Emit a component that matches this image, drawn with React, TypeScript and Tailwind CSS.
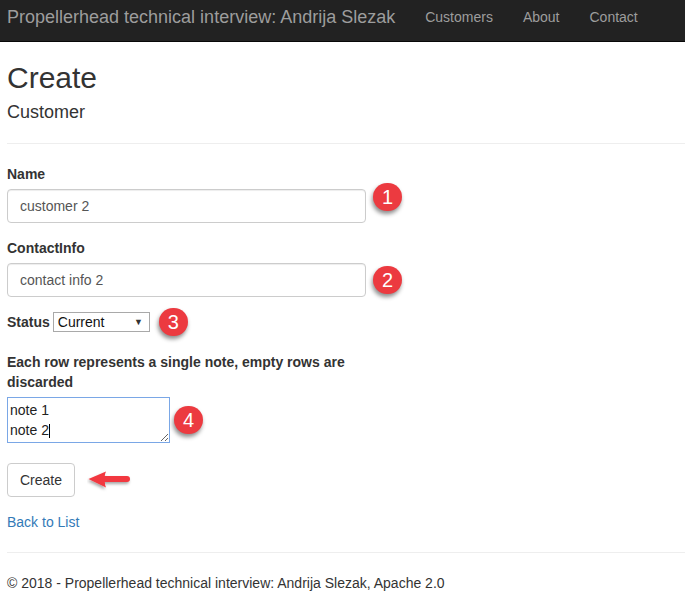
import React from "react";

function Badge({ n }: { n: number }) {
  return (
    <div className="flex h-[28px] w-[29px] shrink-0 items-center justify-center rounded-full bg-[#ec3a40] text-[20px] leading-none text-white shadow-[-1px_3px_4px_rgba(0,0,0,0.45)]">
      {n}
    </div>
  );
}

export default function App() {
  return (
    <div className="min-h-[602px] bg-white text-[14px] leading-[20px] text-[#333]" style={{ fontFamily: '"Liberation Sans", Arial, sans-serif' }}>
      <nav className="flex h-[42px] items-start border-b border-[#080808] bg-[#222] pl-[7px] pt-[7px]">
        <span className="pr-[15px] text-[18px] leading-[20px] text-[#9d9d9d]">Propellerhead technical interview: Andrija Slezak</span>
        <a className="px-[15px] text-[#9d9d9d]">Customers</a>
        <a className="px-[15px] text-[#9d9d9d]">About</a>
        <a className="px-[15px] text-[#9d9d9d]">Contact</a>
      </nav>

      <div className="pl-[7px]">
        <h2 className="mt-[19px] text-[30px] leading-[33px]">Create</h2>
        <h4 className="mt-[8px] text-[18px] leading-[20px]">Customer</h4>
        <hr className="mt-[21px] border-t border-[#eee]" />

        <div className="mt-[20px] w-[420px]">
          <label className="mb-[5px] block font-bold">Name</label>
          <div className="flex items-start">
            <div className="flex h-[34px] w-[359px] items-center rounded-[4px] border border-[#ccc] px-[12px] text-[#555] shadow-[inset_0_1px_1px_rgba(0,0,0,0.075)]">customer 2</div>
            <div className="-mt-[6px] ml-[7px]"><Badge n={1} /></div>
          </div>

          <label className="mb-[5px] mt-[15px] block font-bold">ContactInfo</label>
          <div className="flex items-center">
            <div className="flex h-[34px] w-[359px] items-center rounded-[4px] border border-[#ccc] px-[12px] text-[#555] shadow-[inset_0_1px_1px_rgba(0,0,0,0.075)]">contact info 2</div>
            <div className="ml-[7px]"><Badge n={2} /></div>
          </div>

          <div className="mt-[11px] flex h-[28px] items-center">
            <label className="mr-[3px] font-bold">Status</label>
            <div className="relative flex h-[20px] w-[97px] items-center border border-[#a9a9a9] bg-white pl-[4px] text-[#111]">
              Current
              <span className="absolute right-[6px] top-[3px] text-[9px] leading-[12px] text-[#333]">▼</span>
            </div>
            <div className="ml-[9px]"><Badge n={3} /></div>
          </div>

          <label className="mt-[16px] mb-[5px] block w-[359px] font-bold">Each row represents a single note, empty rows are discarded</label>
          <div className="flex items-center">
            <div className="relative">
              <textarea
                className="block h-[46px] w-[163px] resize border border-[#7aa7e6] px-[2px] py-[2px] text-[14px] leading-[20px] text-[#222] outline-none"
                defaultValue={"note 1\nnote 2"}
              />
              <span className="absolute left-[42px] top-[27px] h-[14px] w-px bg-black" />
            </div>
            <div className="ml-[4px]"><Badge n={4} /></div>
          </div>

          <div className="mt-[20px] flex items-center">
            <button className="h-[34px] rounded-[4px] border border-[#ccc] bg-white px-[12px] text-[#333]">Create</button>
            <svg width="46" height="22" viewBox="0 0 46 22" className="ml-[12px] mt-[2px]">
              <defs>
                <filter id="sh" x="-20%" y="-40%" width="140%" height="200%">
                  <feDropShadow dx="-1" dy="2" stdDeviation="1.5" floodColor="#000" floodOpacity="0.35" />
                </filter>
              </defs>
              <path d="M1.5 9 L19 1.5 Q17.8 4 17.8 6 L40 6 A3 3 0 0 1 40 12 L17.8 12 Q17.8 14.5 19 17.5 Z" fill="#f2393f" filter="url(#sh)" />
            </svg>
          </div>
        </div>

        <div className="mt-[15px]">
          <a className="text-[#337ab7]">Back to List</a>
        </div>

        <hr className="mt-[20px] border-t border-[#eee]" />
        <footer className="mt-[20px]">© 2018 - Propellerhead technical interview: Andrija Slezak, Apache 2.0</footer>
      </div>
    </div>
  );
}
